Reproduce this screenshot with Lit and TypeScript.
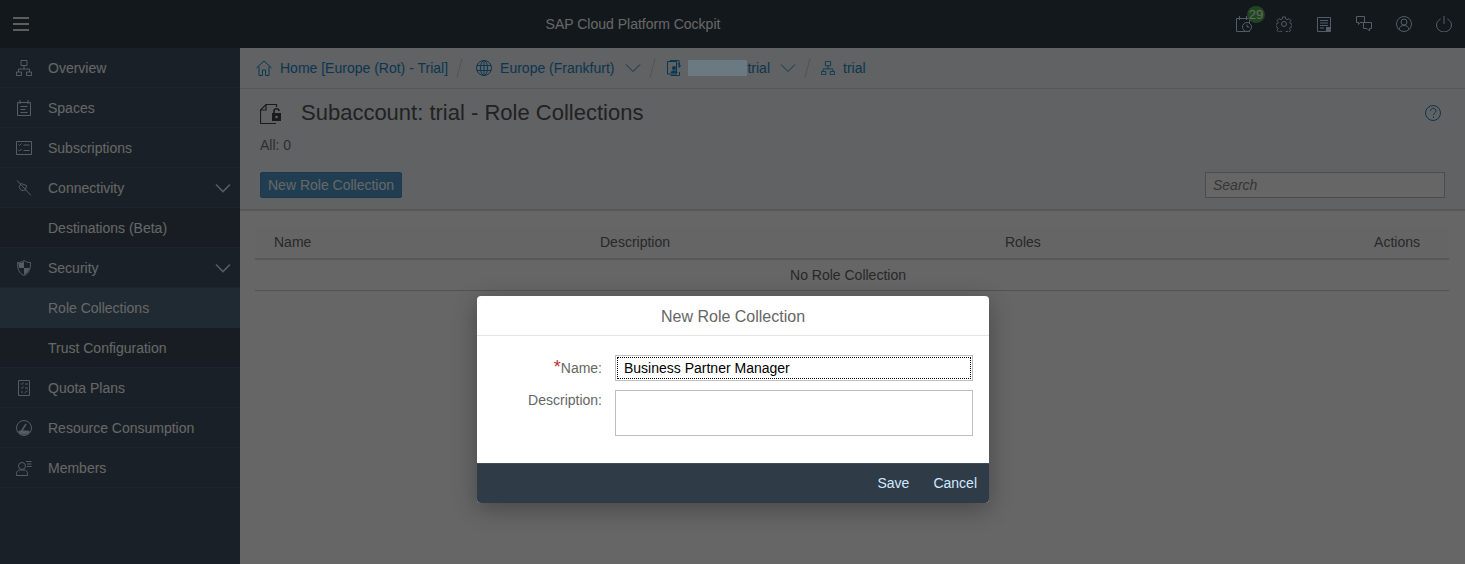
import { LitElement, html, css, svg } from 'lit';
import { customElement } from 'lit/decorators.js';

// icons are drawn on a 16x16 box, stroke colour comes from the parent
const icon = (body: unknown, size = 16) => html`
    <svg class="ico" width=${size} height=${size} viewBox="0 0 16 16" fill="none" stroke="currentColor" stroke-width="1">${body}</svg>
`;

const ICONS = {
    hierarchy: svg`<path d="M5 .5h6v5H5zM8 5.5V9M2.500 12V9h11v3M.5 12h5v3.500h-5zM10.500 12h5v3.500h-5z"/>`,
    spaces: svg`<path d="M1.500 2.500h13v13h-13zM4 0v4M12 0v4M4.500 6.500h7M4.500 9.500h5M4.500 12.500h7"/>`,
    subscriptions: svg`<path d="M.5 1.500h15v13H.5zM7.500 5h6M7.500 10.500h6M2.500 4.500l1 1 2-2M2.500 10l1 1 2-2"/>`,
    connectivity: svg`<path d="M1 .5l14 15M5 3.500l5.500 2-1 4.500-4 .5-2.500-3.500z"/>`,
    security: svg`<path d="M8 .5c2 1.500 4 2 6.500 2 0 6-1 10.500-6.500 13C2.500 13 1.500 8.500 1.500 2.500 4 2.500 6 2 8 .5z"/><path d="M8 8h5.500c-.8 3-2.500 5.200-5.500 6.800zM8 1.500c-1.500 1-3 1.500-5.500 1.600 0 1.700.1 3.300.5 4.900h5z" fill="currentColor" stroke="none"/>`,
    quota: svg`<path d="M2.500.5h11v15h-11zM5 3.500l1 1 1.500-2M5 7.500l1 1 1.500-2M9 4h3M9 8h3M5 12h2M8.500 13l3-2.500"/>`,
    resource: svg`<circle cx="8" cy="8" r="7.500"/><path d="M5 12l5-8" stroke-width="1.500"/><path d="M2 12c3 3.500 9 3.500 12 0l-1.500-1.500h-9z" fill="currentColor" stroke="none"/>`,
    members: svg`<circle cx="6" cy="6" r="3.500"/><path d="M.5 15.500v-2c0-2.200 1.500-3 3-3.500h5c1.500.5 3 1.300 3 3.500v2zM10 1.500h5.500M11 4h4.500M11 6.500h4.500"/>`,
    chevron: svg`<path d="M1 4.500l7 7 7-7"/>`,
    calendar: svg`<path d="M.5 2.500h13v13H.5zM3.500 0v4M10.500 0v4"/><circle cx="11" cy="11" r="4.500" fill="#2f3c48"/><path d="M11 8.500V11h2.500"/>`,
    gear: svg`<circle cx="8" cy="8" r="2.500"/><path d="M6.500.5h3l.4 2.200 1.500.7 1.900-1.200 2 2-1.200 1.900.7 1.500 1.700.4v3l-1.900.4-.7 1.500 1.200 1.900-2 2-1.900-1.200-1.500.7-.4 1.900h-3l-.4-1.900-1.500-.7-1.900 1.200-2-2 1.200-1.900-.7-1.500-1.700-.4v-3l1.900-.4.7-1.500-1.200-1.900 2-2 1.900 1.200 1.500-.7z" transform="translate(.5 .5) scale(.94)"/>`,
    report: svg`<path d="M1.500 1.500h13v14h-13zM4 4.500h8M4 7h8M4 9.500h8M4 12h4"/><path d="M10 11h4.500v4.500H10z" fill="currentColor" stroke="none"/>`,
    chat: svg`<path d="M.5.5h8v6H4L2.500 8.500v-2h-2zM7.500 6.500h8v6h-2v2.500L11 12.500H7.500z"/>`,
    user: svg`<circle cx="8" cy="8" r="7.500"/><circle cx="8" cy="6" r="3"/><path d="M3 13.500c.5-3 2.500-4 5-4s4.500 1 5 4"/>`,
    power: svg`<path d="M8 0v8M4.500 3C2 4.500.5 6.500.5 9a7.500 7 0 0 0 15 0c0-2.500-1.500-4.500-4-6"/>`,
    home: svg`<path d="M.5 8L8 1l7.500 7M3 6.500v9h3.500V10h3v5.500H13v-9"/>`,
    globe: svg`<circle cx="8" cy="8" r="7.500"/><ellipse cx="8" cy="8" rx="3.500" ry="7.500"/><path d="M8 .5v15M1 5.500h14M1 10.500h14"/>`,
    subaccount: svg`<path d="M.5 1.500h9V14h-9zM3 .5h9v2"/><circle cx="7" cy="8" r="2" fill="currentColor" stroke="none"/><path d="M3.500 13c.5-2 2-2.500 3.500-2.500s3 .5 3.500 2.500z" fill="currentColor" stroke="none"/><path d="M3.500 15.500h9V12M13 3.500c-1-.8-2.500-.3-2 .7s2.500.5 2.500 1.500-1.500 1.300-2.500.5M12.300 2.500v5"/>`,
    help: svg`<circle cx="8" cy="8" r="7.500"/><path d="M5.500 6c0-3.500 5.500-3.500 5.500 0 0 2-2.500 2-2.500 4M8.500 11.500v1.500"/>`,
};

const NAV: { label: string; icon?: unknown; open?: boolean; sub?: boolean; active?: boolean }[] = [
    { label: 'Overview', icon: ICONS.hierarchy },
    { label: 'Spaces', icon: ICONS.spaces },
    { label: 'Subscriptions', icon: ICONS.subscriptions },
    { label: 'Connectivity', icon: ICONS.connectivity, open: true },
    { label: 'Destinations (Beta)', sub: true },
    { label: 'Security', icon: ICONS.security, open: true },
    { label: 'Role Collections', sub: true, active: true },
    { label: 'Trust Configuration', sub: true },
    { label: 'Quota Plans', icon: ICONS.quota },
    { label: 'Resource Consumption', icon: ICONS.resource },
    { label: 'Members', icon: ICONS.members },
];

@customElement('app-root')
export class AppRoot extends LitElement {
    static styles = css`
        :host {
            display: block;
            position: relative;
            height: 100vh;
            overflow: hidden;
            font-family: "Liberation Sans", Arial, sans-serif;
            font-size: 14px;
            color: #333;
            background: #fff;
        }

        .ico { display: block; flex: none; }

        /* shell bar */
        .shell {
            display: flex;
            align-items: center;
            height: 48px;
            background: #2f3c48;
            color: #fff;
        }
        .burger {
            width: 48px;
            display: flex;
            flex-direction: column;
            gap: 4px;
            padding-left: 13px;
            box-sizing: border-box;
        }
        .burger span { display: block; width: 16px; height: 2px; background: #e4e8ec; }
        .shell-title { flex: 1; text-align: center; padding-right: 6px; }
        .shell-actions { display: flex; margin-right: 1px; }
        .shell-btn {
            position: relative;
            width: 40px;
            height: 48px;
            display: flex;
            align-items: center;
            justify-content: center;
            color: #d1e8ff;
        }
        .badge {
            position: absolute;
            left: 23px;
            top: 6px;
            width: 18px;
            height: 17px;
            border-radius: 50%;
            background: #50b050;
            color: #fff;
            font-size: 13px;
            line-height: 17px;
            text-align: center;
        }

        .body { display: flex; height: calc(100vh - 48px); }

        /* side navigation */
        .side { width: 240px; flex: none; background: #3f5161; color: #fff; }
        .nav-row {
            display: flex;
            align-items: center;
            height: 40px;
            box-sizing: border-box;
            padding-left: 16px;
            border-bottom: 1px solid #4a5d6e;
        }
        .nav-row.sub { background: #3a4a58; padding-left: 48px; }
        .nav-row.active { background: #51697d; border-bottom-color: #51697d; }
        .nav-row .ico { color: #d1e8ff; }
        .nav-label { margin-left: 16px; flex: 1; }
        .nav-row.sub .nav-label { margin-left: 0; }
        .nav-chevron { margin-right: 9px; color: #d1e8ff; }
        .nav-chevron .ico { stroke-width: 1.6; }

        /* main column */
        .main { flex: 1; min-width: 0; display: flex; flex-direction: column; background: #fff; }
        .crumbs {
            display: flex;
            align-items: center;
            height: 40px;
            padding-left: 16px;
            border-bottom: 1px solid #d9d9d9;
            background: #eff4f9;
            color: #1c88c8;
        }
        .crumb { display: flex; align-items: center; gap: 8px; }
        .crumb.last { margin-left: -1px; }
        .sep {
            width: 1px;
            height: 20px;
            margin: 0 16px 0 11px;
            background: #ccc;
            transform: rotate(14deg);
        }
        .sep.tight { margin-right: 14px; }
        .crumb-chevron { margin-left: 11px; }
        .crumb-chevron.near { margin-left: 10px; }
        /* redaction patch from the original shot, sits above the modal dimming */
        .blurred {
            position: relative;
            z-index: 2;
            width: 59px;
            height: 16px;
            margin-left: -3px;
            margin-right: -8px;
            background: #6b7983;
        }

        .page-head {
            height: 122px;
            box-sizing: border-box;
            padding: 12px 20px 0;
            background: #eff4f9;
            border-bottom: 2px solid #d9d9d9;
        }
        .title-row { display: flex; align-items: center; height: 24px; }
        .title-icon { color: #444; }
        h1 { margin: 0 0 0 17px; flex: 1; font-size: 22px; font-weight: 400; line-height: 24px; color: #555; }
        .help { color: #1c88c8; margin-right: 4px; }
        .count { margin-top: 12px; line-height: 16px; color: #777; }
        .tools { display: flex; justify-content: space-between; margin-top: 19px; }
        .btn {
            height: 26px;
            box-sizing: border-box;
            padding: 0 7px;
            border: 1px solid #4a8fc0;
            border-radius: 2px;
            background: #5299cc;
            color: #fff;
            line-height: 24px;
        }
        .search {
            width: 240px;
            height: 26px;
            box-sizing: border-box;
            padding: 0 7px;
            border: 1px solid #bfbfbf;
            background: #fff;
            color: #888;
            font-style: italic;
            line-height: 24px;
        }

        .table { margin: 15px 16px 0 15px; }
        .thead {
            display: grid;
            grid-template-columns: 326px 405px 1fr auto;
            height: 34px;
            box-sizing: border-box;
            padding: 0 29px 0 19px;
            align-items: center;
            border-bottom: 2px solid #ddd;
            background: #fcfcfc;
            color: #666;
        }
        .tbody {
            height: 31px;
            box-sizing: border-box;
            padding-right: 8px;
            border-bottom: 1px solid #ccc;
            text-align: center;
            line-height: 30px;
            color: #666;
        }

        /* modal layer */
        .block { position: absolute; z-index: 1; inset: 0; background: rgba(0, 0, 0, 0.6); }
        .dialog {
            position: absolute;
            z-index: 3;
            left: 477px;
            top: 296px;
            width: 512px;
            border-radius: 4px;
            overflow: hidden;
            background: #fff;
            box-shadow: 0 6px 24px rgba(0, 0, 0, 0.3);
        }
        .dlg-title {
            height: 40px;
            box-sizing: border-box;
            padding-top: 2px;
            border-bottom: 1px solid #e5e5e5;
            text-align: center;
            font-size: 16px;
            line-height: 38px;
            color: #666;
        }
        .form {
            display: grid;
            grid-template-columns: 125px 358px;
            column-gap: 13px;
            row-gap: 9px;
            height: 127px;
            box-sizing: border-box;
            padding: 19px 0 0;
            align-content: start;
            color: #666;
        }
        .label { text-align: right; line-height: 26px; }
        .label.top { line-height: 20px; }
        .req { color: #c03030; font-size: 18px; line-height: 14px; }
        .input {
            height: 26px;
            box-sizing: border-box;
            border: 1px solid #bfbfbf;
            padding: 1px;
        }
        .focus {
            height: 100%;
            box-sizing: border-box;
            border: 1px dotted #000;
            padding-left: 6px;
            color: #000;
            line-height: 20px;
        }
        .area { height: 46px; box-sizing: border-box; border: 1px solid #bfbfbf; }
        .dlg-foot {
            display: flex;
            justify-content: flex-end;
            align-items: center;
            gap: 24px;
            height: 40px;
            padding: 0 12px 2px 0;
            background: #2f3c48;
            border-top: 1px solid #3d5061;
            box-sizing: border-box;
            color: #d1e8ff;
        }
    `;

    render() {
        return html`
            <div class="shell">
                <div class="burger"><span></span><span></span><span></span></div>
                <div class="shell-title">SAP Cloud Platform Cockpit</div>
                <div class="shell-actions">
                    <div class="shell-btn">${icon(ICONS.calendar)}<span class="badge">29</span></div>
                    <div class="shell-btn">${icon(ICONS.gear)}</div>
                    <div class="shell-btn">${icon(ICONS.report)}</div>
                    <div class="shell-btn">${icon(ICONS.chat)}</div>
                    <div class="shell-btn">${icon(ICONS.user)}</div>
                    <div class="shell-btn">${icon(ICONS.power)}</div>
                </div>
            </div>
            <div class="body">
                <nav class="side">
                    ${NAV.map(n => html`
                        <div class="nav-row ${n.sub ? 'sub' : ''} ${n.active ? 'active' : ''}">
                            ${n.icon ? icon(n.icon) : ''}
                            <span class="nav-label">${n.label}</span>
                            ${n.open ? html`<span class="nav-chevron">${icon(ICONS.chevron)}</span>` : ''}
                        </div>
                    `)}
                </nav>
                <div class="main">
                    <div class="crumbs">
                        <span class="crumb">${icon(ICONS.home)}Home [Europe (Rot) - Trial]</span>
                        <span class="sep"></span>
                        <span class="crumb">${icon(ICONS.globe)}Europe (Frankfurt)</span>
                        <span class="crumb-chevron">${icon(ICONS.chevron)}</span>
                        <span class="sep tight"></span>
                        <span class="crumb">${icon(ICONS.subaccount)}<span class="blurred"></span>trial</span>
                        <span class="crumb-chevron near">${icon(ICONS.chevron)}</span>
                        <span class="sep tight"></span>
                        <span class="crumb last">${icon(ICONS.hierarchy, 14)}trial</span>
                    </div>
                    <div class="page-head">
                        <div class="title-row">
                            <svg class="ico title-icon" width="24" height="24" viewBox="0 0 24 24" fill="none" stroke="currentColor" stroke-width="1.200">
                                <path d="M16.500 6V3.500H6L.5 9v12.500c0 .5.5 1 1 1H16"/>
                                <path d="M6 3.500V9H.5"/>
                                <path d="M12 12h9v8h-9z" fill="currentColor" stroke="none"/>
                                <path d="M14 12V10c0-3 5-3 5 0" stroke-width="1.600"/>
                                <circle cx="16.500" cy="16" r="1.300" fill="#eff4f9" stroke="none"/>
                            </svg>
                            <h1>Subaccount: trial - Role Collections</h1>
                            <span class="help">${icon(ICONS.help)}</span>
                        </div>
                        <div class="count">All: 0</div>
                        <div class="tools">
                            <div class="btn">New Role Collection</div>
                            <div class="search">Search</div>
                        </div>
                    </div>
                    <div class="table">
                        <div class="thead"><span>Name</span><span>Description</span><span>Roles</span><span>Actions</span></div>
                        <div class="tbody">No Role Collection</div>
                    </div>
                </div>
            </div>

            <div class="block"></div>
            <div class="dialog">
                <div class="dlg-title">New Role Collection</div>
                <div class="form">
                    <div class="label"><span class="req">*</span>Name:</div>
                    <div class="input"><div class="focus">Business Partner Manager</div></div>
                    <div class="label top">Description:</div>
                    <div class="area"></div>
                </div>
                <div class="dlg-foot"><span>Save</span><span>Cancel</span></div>
            </div>
        `;
    }
}
